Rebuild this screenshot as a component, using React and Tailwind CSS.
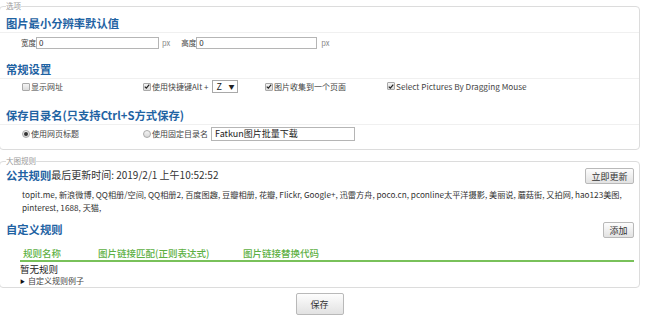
import React from 'react';

const F = "font-['Noto_Sans_CJK_SC','Noto_Sans',sans-serif]";

function Check({ checked }) {
  return (
    <span className="w-[8px] h-[8px] shrink-0 border border-[#a9a9a9] rounded-[1px] bg-gradient-to-b from-[#f4f4f4] to-[#dcdcdc] flex items-center justify-center">
      {checked && (
        <svg width="7" height="7" viewBox="0 0 8 8">
          <path d="M1 4.2 L3.1 6.3 L7 1.4" fill="none" stroke="#222" strokeWidth="1.6" />
        </svg>
      )}
    </span>
  );
}

function Radio({ checked }) {
  return (
    <span className="w-[8px] h-[8px] shrink-0 rounded-full border border-[#a9a9a9] bg-gradient-to-b from-[#f4f4f4] to-[#d8d8d8] flex items-center justify-center">
      {checked && <span className="w-[4px] h-[4px] rounded-full bg-[#333]" />}
    </span>
  );
}

function Heading({ children, line = true }) {
  return (
    <div className={`h-[17px] pl-[6px] leading-[14px] text-[11.3px] font-bold text-[#1f63a3] ${line ? 'border-b border-[#f0f0f0]' : ''}`}>
      {children}
    </div>
  );
}

function Btn({ children, className = '' }) {
  return (
    <button className={`border border-[#b9b9b9] rounded-[2px] bg-gradient-to-b from-[#fdfdfd] to-[#e2e2e2] text-[9px] text-[#333] leading-none flex items-center justify-center ${className}`}>
      {children}
    </button>
  );
}

export default function App() {
  const sites1 = 'topit.me, 新浪微博, QQ相册/空间, QQ相册2, 百度图趣, 豆瓣相册, 花瓣, Flickr, Google+, 迅雷方舟, poco.cn, pconline太平洋摄影, 美丽说, 蘑菇街, 又拍网, hao123美图,';
  const sites2 = 'pinterest, 1688, 天猫,';

  return (
    <div className={`w-[650px] h-[321px] bg-white overflow-hidden ${F} text-[#444]`}>
      <div className="w-[641px] ml-[-1px] pt-[1px]">
        {/* 选项 */}
        <fieldset className="border border-[#dcdcdc] rounded-[4px] pb-[8px]">
          <legend className="ml-[6px] text-[7.5px] leading-[10px] text-[#999]">选项</legend>

          <div className="mt-[5px]"><Heading>图片最小分辨率默认值</Heading></div>

          <div className="mt-[4px] h-[12px] pl-[21px] flex items-center text-[7.5px]">
            <span>宽度</span>
            <div className="w-[123px] h-[12px] border border-[#b5b5b5] bg-white text-[8px] text-[#333] leading-[10px] pl-[2px]">0</div>
            <span className="ml-[3px] text-[#888]">px</span>
            <span className="ml-[11px]">高度</span>
            <div className="w-[121px] h-[12px] border border-[#b5b5b5] bg-white text-[8px] text-[#333] leading-[10px] pl-[2px]">0</div>
            <span className="ml-[4px] text-[#888]">px</span>
          </div>

          <div className="mt-[13px]"><Heading>常规设置</Heading></div>

          <div className="mt-[1px] h-[13px] pl-[22px] flex items-center text-[8px]">
            <div className="w-[121px] flex items-center"><Check /><span className="ml-[1px]">显示网址</span></div>
            <div className="w-[122px] flex items-center">
              <Check checked /><span className="ml-[1px]">使用快捷键Alt +</span>
              <div className="ml-[4px] w-[26px] h-[13px] border border-[#a9a9a9] bg-white flex items-center justify-between px-[3px] text-[9px] text-[#222]">
                <span>Z</span><span className="text-[6px]">▼</span>
              </div>
            </div>
            <div className="w-[122px] flex items-center"><Check checked /><span className="ml-[1px]">图片收集到一个页面</span></div>
            <div className="flex items-center"><Check checked /><span className="ml-[1px] text-[8.2px]">Select Pictures By Dragging Mouse</span></div>
          </div>

          <div className="mt-[15px]"><Heading>保存目录名(只支持Ctrl+S方式保存)</Heading></div>

          <div className="mt-[2px] h-[14px] pl-[22px] flex items-center text-[8px]">
            <div className="w-[121px] flex items-center"><Radio checked /><span className="ml-[1px]">使用网页标题</span></div>
            <div className="flex items-center">
              <Radio /><span className="ml-[1px]">使用固定目录名</span>
              <div className="ml-[3px] w-[144px] h-[14px] border border-[#b5b5b5] bg-white text-[9px] text-[#222] leading-[12px] pl-[3px]">Fatkun图片批量下载</div>
            </div>
          </div>
        </fieldset>

        {/* 大图规则 */}
        <fieldset className="mt-[6px] border border-[#dcdcdc] rounded-[4px] pb-[1px]">
          <legend className="ml-[6px] text-[7.5px] leading-[10px] text-[#999]">大图规则</legend>

          <div className="mt-[2px] h-[16px] flex items-center justify-between pr-[5px]">
            <div className="flex items-end">
              <Heading line={false}>公共规则</Heading>
              <span className="text-[10px] text-[#333] leading-[14px] h-[17px]">最后更新时间: 2019/2/1 上午10:52:52</span>
            </div>
            <Btn className="w-[49px] h-[16px]">立即更新</Btn>
          </div>

          <div className="mt-[4px] pl-[22px] text-[8.2px] leading-[12.5px] text-[#333] whitespace-nowrap">
            <div>{sites1}</div>
            <div>{sites2}</div>
          </div>

          <div className="mt-[9px] h-[16px] flex items-center justify-between pr-[5px]">
            <div className="pt-[1px]"><Heading line={false}>自定义规则</Heading></div>
            <Btn className="w-[31px] h-[16px]">添加</Btn>
          </div>

          <div className="mt-[9px] ml-[20px] mr-[5px] h-[15px] border-b-2 border-[#79c15a] flex items-start text-[9.5px] font-medium text-[#5db043] leading-[12px]">
            <span className="ml-[3px] w-[75px]">规则名称</span>
            <span className="w-[145px]">图片链接匹配(正则表达式)</span>
            <span>图片链接替换代码</span>
          </div>

          <div className="mt-[1px] pl-[20px] text-[9.5px] leading-[12px] text-[#222]">暂无规则</div>
          <div className="pl-[20px] text-[8px] leading-[11px] text-[#444] flex items-center">
            <span className="text-[5px] text-[#111] mr-[3px]">▶</span>自定义规则例子
          </div>
        </fieldset>

        <div className="mt-[5px] flex justify-center">
          <Btn className="w-[48px] h-[22px]">保存</Btn>
        </div>
      </div>
    </div>
  );
}
